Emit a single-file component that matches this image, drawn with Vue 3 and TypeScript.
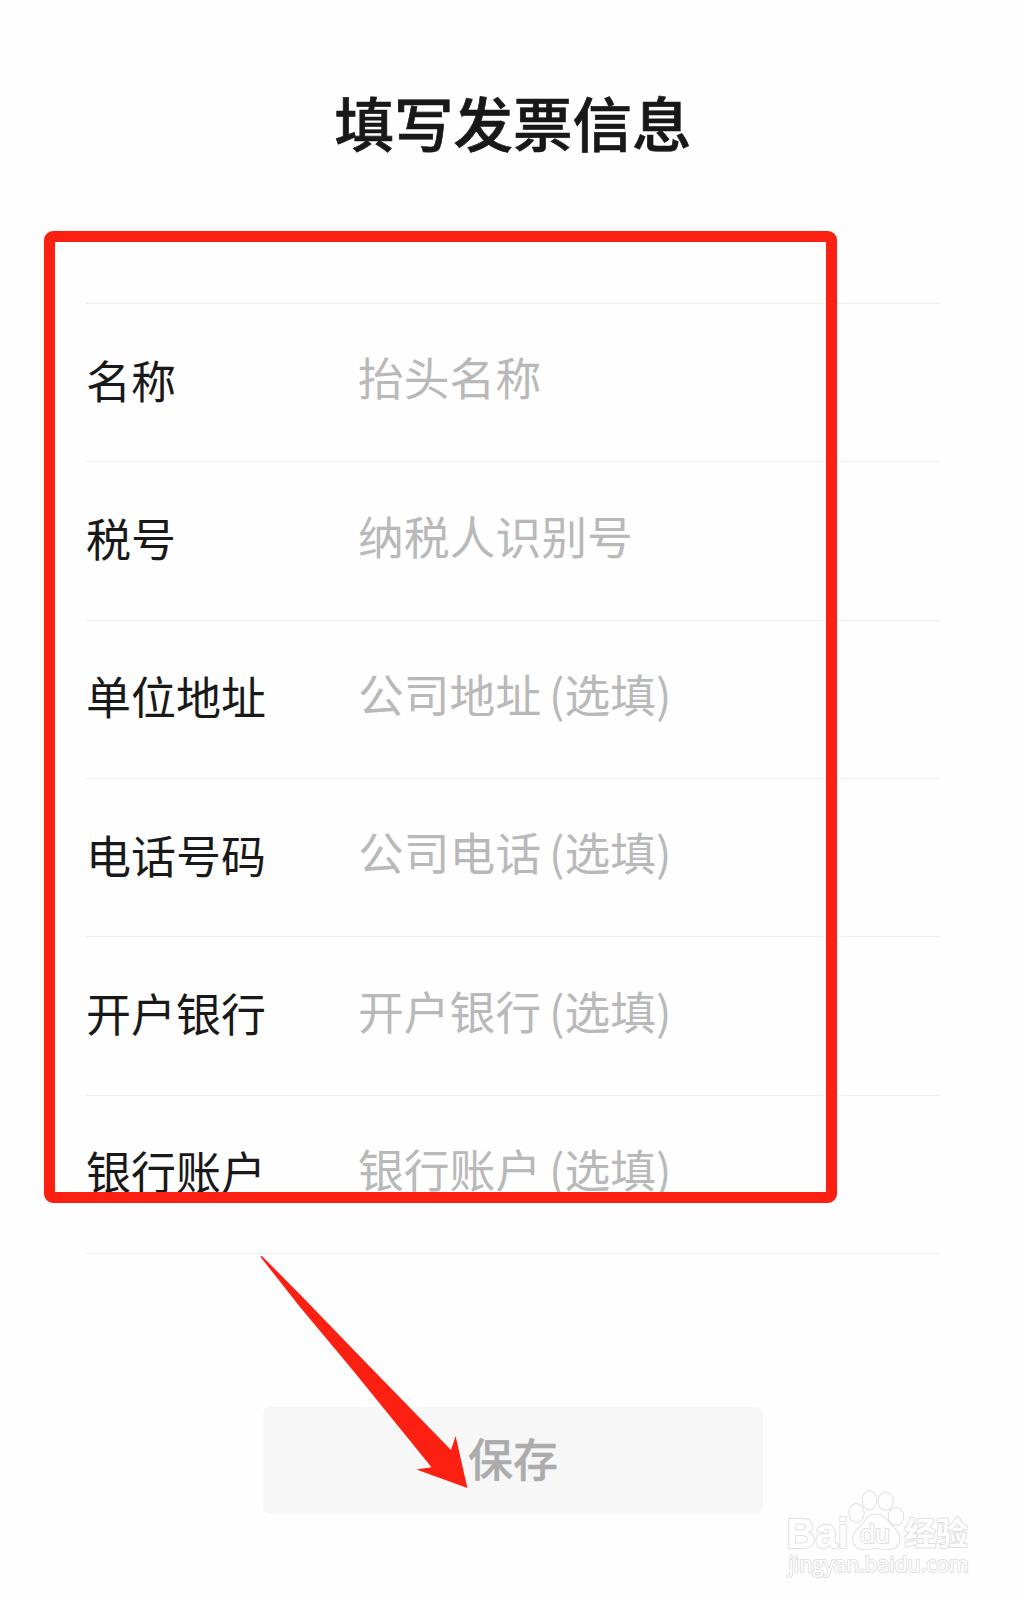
<script setup lang="ts">
interface Field {
  label: string
  hint: string
}

const fields: Field[] = [
  { label: '名称', hint: '抬头名称' },
  { label: '税号', hint: '纳税人识别号' },
  { label: '单位地址', hint: '公司地址 (选填)' },
  { label: '电话号码', hint: '公司电话 (选填)' },
  { label: '开户银行', hint: '开户银行 (选填)' },
  { label: '银行账户', hint: '银行账户 (选填)' },
]
</script>

<template>
  <main class="page">
    <h1 class="title">填写发票信息</h1>

    <section class="form">
      <div v-for="field in fields" :key="field.label" class="row">
        <span class="label">{{ field.label }}</span>
        <span class="hint">{{ field.hint }}</span>
      </div>
    </section>

    <button class="save" type="button">保存</button>

    <div class="frame"></div>

    <svg class="arrow" viewBox="0 0 220 240" aria-hidden="true">
      <path d="M10.4 6.8Q11.2 5.4 12.4 6.4L53 47.500L110 106.500L201 200L205.6 186L217.4 238L166.5 219.5L181.5 217.2L103 120.500L50 57Z" fill="#fc2012" />
    </svg>

    <svg class="watermark" viewBox="0 0 200 100" aria-hidden="true">
      <g class="outline">
        <text class="brand" x="6.5" y="57.8" textLength="62" lengthAdjust="spacingAndGlyphs">Bai</text>
        <ellipse cx="76.5" cy="23" rx="7.1" ry="9" />
        <ellipse cx="89.5" cy="10.2" rx="6.8" ry="9.1" />
        <ellipse cx="105.7" cy="11.3" rx="7.2" ry="8.8" />
        <ellipse cx="116" cy="26.5" rx="7.3" ry="8.5" />
        <path d="M96 24.5C104 24.5 108 32 113 37C118 42 121 47 118.500 53C115 61 105 59 96 58C87 59 78 61 74.500 54C71.500 48 74 42 80 37C86 32 87 24.500 96 24.500Z" />
        <text class="du" x="80" y="53" textLength="30" lengthAdjust="spacingAndGlyphs">du</text>
        <text class="cn" x="124.5" y="55" textLength="63" lengthAdjust="spacingAndGlyphs">经验</text>
        <text class="site" x="8.5" y="81.5" textLength="180" lengthAdjust="spacingAndGlyphs">jingyan.baidu.com</text>
      </g>
    </svg>
  </main>
</template>

<style>
body {
  background: #fefefe;
}
</style>

<style scoped>
.page {
  position: relative;
  box-sizing: border-box;
  width: 1026px;
  height: 1600px;
  padding-top: 76px;
  overflow: hidden;
  display: flex;
  flex-direction: column;
  align-items: center;
  background: #fefefe;
  font-family: "Noto Sans CJK SC", sans-serif;
}

.title {
  margin: 0;
  height: 90px;
  line-height: 90px;
  font-size: 59.5px;
  font-weight: 500;
  color: #181818;
  -webkit-text-stroke: 0.7px #181818;
}

.form {
  width: 854px;
  margin-top: 137px;
  border-top: 1px solid #ececec;
}

.row {
  display: flex;
  align-items: center;
  box-sizing: border-box;
  height: 158.36px;
  padding-bottom: 7px;
  border-bottom: 1px solid #efefef;
  white-space: nowrap;
}

.label {
  width: 272px;
  font-size: 45px;
  color: #191919;
}

.hint {
  padding-bottom: 6px;
  font-size: 45.8px;
  word-spacing: -2.5px;
  color: #b9b9b9;
}

.save {
  width: 500px;
  height: 107px;
  margin: 153px 0 0;
  padding: 0 0 7px;
  border: 0;
  border-radius: 7px;
  background: #f7f7f7;
  font-family: inherit;
  font-size: 45px;
  font-weight: 500;
  color: #acacac;
  -webkit-text-stroke: 0.4px #acacac;
}

.frame {
  position: absolute;
  left: 44px;
  top: 231px;
  box-sizing: border-box;
  width: 793px;
  height: 972px;
  border: 11.5px solid #fc2012;
  border-radius: 9px;
}

.arrow {
  position: absolute;
  left: 250px;
  top: 1250px;
  width: 220px;
  height: 240px;
}

.watermark {
  position: absolute;
  left: 780px;
  top: 1490px;
  width: 200px;
  height: 100px;
}

.outline {
  fill: #fefefe;
  stroke: #e0e0e0;
  stroke-width: 2px;
  stroke-linejoin: round;
  paint-order: stroke;
}

.brand {
  font: 700 43px "Liberation Sans", sans-serif;
}

.du {
  font: 400 26px "Liberation Sans", sans-serif;
}

.cn {
  font: 700 32px "Noto Sans CJK SC", sans-serif;
}

.site {
  font: 400 22px "Open Sans", sans-serif;
}
</style>
